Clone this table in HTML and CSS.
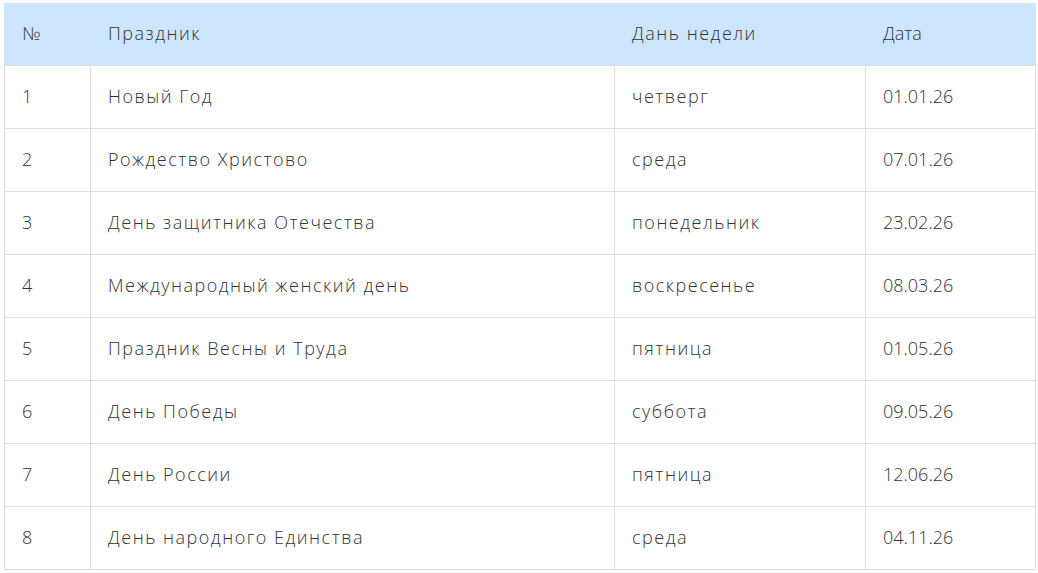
FILE: index.html
```html
<!DOCTYPE html>
<html lang="ru">
<head>
<meta charset="utf-8">
<link rel="stylesheet" href="styles.css">
</head>
<body>
<table class="holidays">
  <colgroup>
    <col class="c-num"><col class="c-name"><col class="c-day"><col class="c-date">
  </colgroup>
  <thead>
    <tr><th>№</th><th>Праздник</th><th>Дань недели</th><th class="date">Дата</th></tr>
  </thead>
  <tbody>
    <tr><td>1</td><td>Новый Год</td><td>четверг</td><td class="date">01.01.26</td></tr>
    <tr><td>2</td><td>Рождество Христово</td><td>среда</td><td class="date">07.01.26</td></tr>
    <tr><td>3</td><td>День защитника Отечества</td><td>понедельник</td><td class="date">23.02.26</td></tr>
    <tr><td>4</td><td>Международный женский день</td><td>воскресенье</td><td class="date">08.03.26</td></tr>
    <tr><td>5</td><td>Праздник Весны и Труда</td><td>пятница</td><td class="date">01.05.26</td></tr>
    <tr><td>6</td><td>День Победы</td><td>суббота</td><td class="date">09.05.26</td></tr>
    <tr><td>7</td><td>День России</td><td>пятница</td><td class="date">12.06.26</td></tr>
    <tr><td>8</td><td>День народного Единства</td><td>среда</td><td class="date">04.11.26</td></tr>
  </tbody>
</table>
</body>
</html>
```

FILE: styles.css
```css
html, body {
  margin: 0;
  padding: 0;
  background: #ffffff;
}
body {
  padding: 3px 4px;
  font-family: "Open Sans", "Noto Sans", sans-serif;
  font-weight: 300;
  font-size: 18px;
  letter-spacing: 1.5px;
  color: #333333;
}
.holidays {
  width: 1031px;
  border-collapse: collapse;
  table-layout: fixed;
}
.c-num { width: 86px; }
.c-name { width: 524px; }
.c-day { width: 251px; }
.c-date { width: 170px; }
.holidays th,
.holidays td {
  height: 60px;
  padding: 0 0 2px 17px;
  text-align: left;
  vertical-align: middle;
  border: 1px solid #dcdfe3;
  font-weight: 300;
  white-space: nowrap;
}
.holidays th {
  height: 58px;
  padding-bottom: 3px;
  background: #cde5fd;
  border-color: #cde5fd;
  border-bottom: none;
}
.holidays thead tr th:not(:first-child) {
  border-left-color: #c7dff6;
}
.holidays .date {
  letter-spacing: 0;
}
```
